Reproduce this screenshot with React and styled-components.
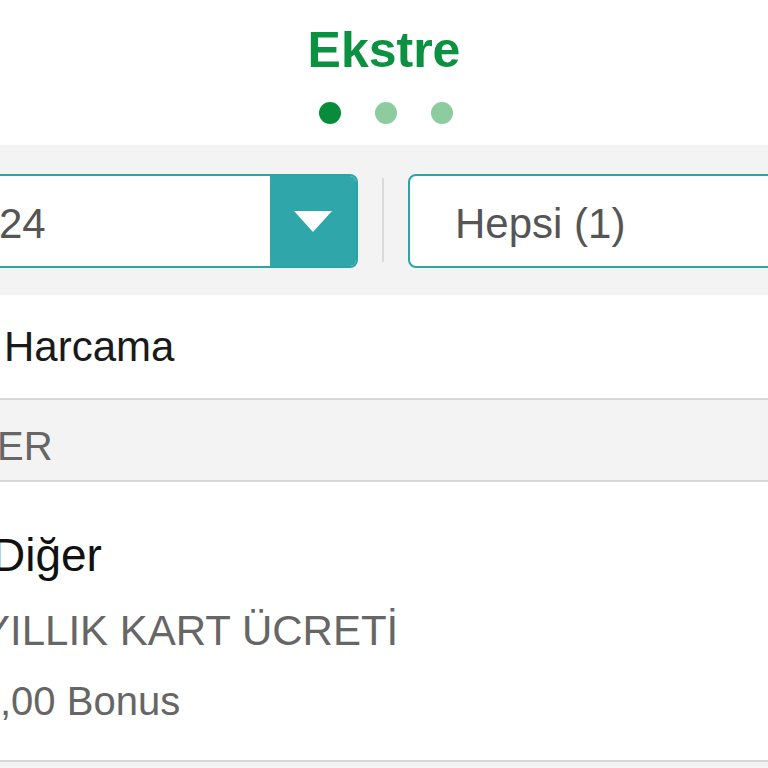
import React from "react";
import styled, { createGlobalStyle } from "styled-components";

const Global = createGlobalStyle`
  html, body { margin: 0; padding: 0; background: #f3f3f3; }
  body { width: 768px; height: 768px; overflow: hidden; font-family: "Liberation Sans", Arial, Helvetica, sans-serif; }
  * { box-sizing: border-box; }
`;

const Page = styled.div`
  width: 768px;
  height: 768px;
  overflow: hidden;
  display: flex;
  flex-direction: column;
  background: #f3f3f3;
`;

const Header = styled.header`
  background: #fff;
  height: 145px;
  padding-top: 25px;
  display: flex;
  flex-direction: column;
  align-items: center;
`;

const Title = styled.h1`
  margin: 0;
  font-size: 50px;
  line-height: 1;
  font-weight: 700;
  color: #0b9141;
`;

const Dots = styled.div`
  margin-top: 27px;
  margin-left: 4px;
  display: flex;
  gap: 34px;
`;

const Dot = styled.span`
  width: 22px;
  height: 22px;
  border-radius: 50%;
  background: ${(p) => (p.$active ? "#078c3b" : "#8ccc9f")};
`;

const FilterBar = styled.div`
  height: 150px;
  padding-top: 29px;
  background: #f3f3f3;
  display: flex;
  align-items: flex-start;
  gap: 24px;
`;

const Select = styled.div`
  flex: none;
  height: 94px;
  width: ${(p) => p.$width}px;
  margin-left: ${(p) => p.$offset || 0}px;
  background: #fff;
  border: 2.5px solid #2ba3a7;
  border-radius: 8px;
  display: flex;
  align-items: center;
  overflow: hidden;
`;

const SelectText = styled.span`
  flex: 1;
  padding-left: ${(p) => p.$pad}px;
  padding-top: 6px;
  font-size: 42px;
  line-height: 1;
  color: #555;
`;

const Arrow = styled.span`
  flex: none;
  width: 86px;
  align-self: stretch;
  background: #2ea6aa;
  display: flex;
  align-items: center;
  justify-content: center;
`;

const Divider = styled.span`
  flex: none;
  width: 2px;
  height: 84px;
  margin-top: 4px;
  background: #dadada;
`;

const SelectGroup = styled.div`
  display: flex;
  gap: 26px;
`;

const SummaryRow = styled.div`
  background: #fff;
  height: 105px;
  padding-top: 31px;
  border-bottom: 2px solid #d9d9d9;
`;

const Text = styled.div`
  margin-left: ${(p) => p.$shift || 0}px;
  font-size: ${(p) => p.$size}px;
  line-height: 1;
  color: ${(p) => p.$color};
  white-space: nowrap;
`;

const SectionHead = styled.div`
  background: #f3f3f3;
  height: 82px;
  padding-top: 26px;
  border-bottom: 2px solid #d9d9d9;
`;

const Item = styled.div`
  background: #fff;
  height: 280px;
  padding-top: 50px;
  border-bottom: 2px solid #d6d6d6;
  display: flex;
  flex-direction: column;
`;

const Gap = styled.div`
  height: ${(p) => p.$h}px;
  flex: none;
`;

export default function App() {
  return (
    <>
      <Global />
      <Page>
        <Header>
          <Title>Ekstre</Title>
          <Dots>
            <Dot $active />
            <Dot />
            <Dot />
          </Dots>
        </Header>
        <FilterBar>
          <Select $width={458} $offset={-100}>
            <SelectText $pad={97}>24</SelectText>
            <Arrow>
              <svg width="38" height="21" viewBox="0 0 38 21">
                <polygon points="0,0 38,0 19,21" fill="#fff" />
              </svg>
            </Arrow>
          </Select>
          <Divider />
          <SelectGroup>
            <Select $width={420} $offset={0}>
              <SelectText $pad={45}>Hepsi (1)</SelectText>
            </Select>
          </SelectGroup>
        </FilterBar>
        <SummaryRow>
          <Text $size={42} $color="#1a1a1a" $shift={4}>Harcama</Text>
        </SummaryRow>
        <SectionHead>
          <Text $size={40} $color="#666" $shift={-3}>ER</Text>
        </SectionHead>
        <Item>
          <Text $size={46} $color="#111" $shift={-8}>Diğer</Text>
          <Gap $h={32} />
          <Text $size={42} $color="#666" $shift={-18}>YILLIK KART ÜCRETİ</Text>
          <Gap $h={29} />
          <Text $size={40} $color="#666" $shift={0}>,00 Bonus</Text>
        </Item>
      </Page>
    </>
  );
}
